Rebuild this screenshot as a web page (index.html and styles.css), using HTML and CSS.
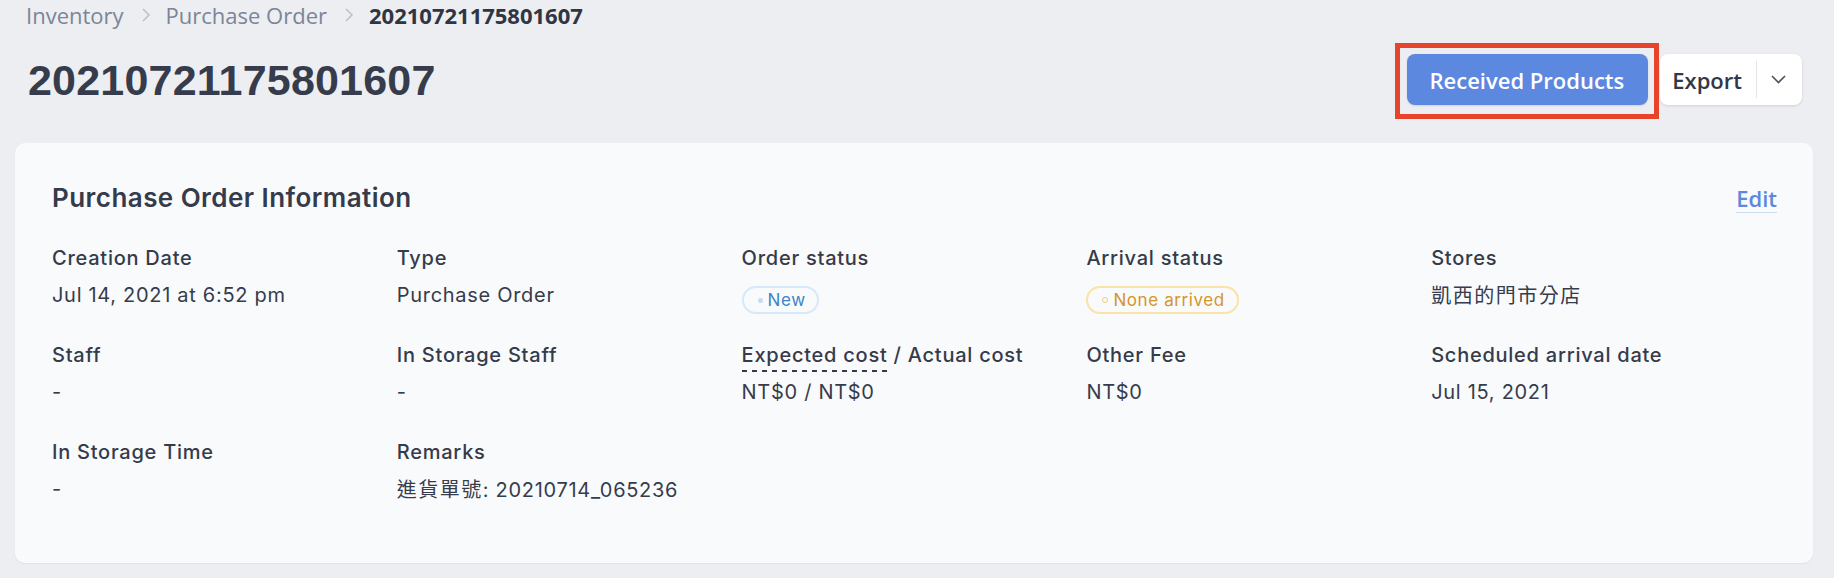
FILE: index.html
```html
<!DOCTYPE html>
<html lang="en">
<head>
<meta charset="utf-8">
<title>20210721175801607</title>
<link rel="stylesheet" href="styles.css">
</head>
<body>
<div class="page">
  <nav class="crumbs">
    <a class="crumb">Inventory</a>
    <svg class="sep" viewBox="0 0 8 14" aria-hidden="true"><polyline points="1,1 7,7 1,13"/></svg>
    <a class="crumb">Purchase Order</a>
    <svg class="sep" viewBox="0 0 8 14" aria-hidden="true"><polyline points="1,1 7,7 1,13"/></svg>
    <span class="crumb current">20210721175801607</span>
  </nav>

  <header class="head">
    <h1 class="title">20210721175801607</h1>
    <div class="actions">
      <span class="highlight">
        <button class="btn-primary">Received Products</button>
        <span class="annot"></span>
      </span>
      <div class="btn-split">
        <span class="split-label">Export</span>
        <span class="split-div"></span>
        <svg class="split-caret" viewBox="0 0 15 9" aria-hidden="true"><polyline points="1,1 7.5,7.5 14,1"/></svg>
      </div>
    </div>
  </header>

  <section class="card">
    <div class="card-head">
      <h2 class="card-title">Purchase Order Information</h2>
      <a class="edit">Edit</a>
    </div>
    <div class="grid">
      <div class="field"><div class="label">Creation Date</div><div class="value">Jul 14, 2021 at 6:52 pm</div></div>
      <div class="field"><div class="label">Type</div><div class="value">Purchase Order</div></div>
      <div class="field"><div class="label">Order status</div><div class="value badges"><span class="badge badge-new"><span class="dot"></span>New</span></div></div>
      <div class="field"><div class="label">Arrival status</div><div class="value badges"><span class="badge badge-none"><span class="dot"></span>None arrived</span></div></div>
      <div class="field"><div class="label">Stores</div><div class="value"><span class="cjk">凱西的門市分店</span></div></div>

      <div class="field"><div class="label">Staff</div><div class="value">-</div></div>
      <div class="field"><div class="label">In Storage Staff</div><div class="value">-</div></div>
      <div class="field"><div class="label"><span class="dashed">Expected cost</span> / Actual cost</div><div class="value">NT$0 / NT$0</div></div>
      <div class="field"><div class="label">Other Fee</div><div class="value">NT$0</div></div>
      <div class="field"><div class="label">Scheduled arrival date</div><div class="value">Jul 15, 2021</div></div>

      <div class="field"><div class="label">In Storage Time</div><div class="value">-</div></div>
      <div class="field"><div class="label">Remarks</div><div class="value"><span class="cjk">進貨單號</span>: 20210714_065236</div></div>
    </div>
  </section>
</div>
</body>
</html>
```

FILE: styles.css
```css
* { box-sizing: border-box; }

html, body {
  margin: 0;
  background: #eceef1;
}

.page {
  padding: 0 21px 15px 15px;
}

/* breadcrumb */
.crumbs {
  display: flex;
  align-items: center;
  height: 30px;
  padding-left: 11px;
  font-family: "Open Sans", "Liberation Sans", sans-serif;
  font-size: 22px;
  line-height: 30px;
  color: #7b8598;
}
.crumb { color: #7b8598; text-decoration: none; }
.crumb.current { color: #2f3542; font-weight: 700; }
.sep {
  width: 8px;
  height: 14px;
  margin: 0 16px 0 18px;
  fill: none;
  stroke: #b7bdc8;
  stroke-width: 1.4;
}

/* header */
.head {
  display: flex;
  justify-content: space-between;
  align-items: center;
  height: 51px;
  margin-top: 24px;
  padding: 0 11px 0 13px;
}
.title {
  margin: 0;
  font-family: "Liberation Sans", Arial, sans-serif;
  font-weight: 700;
  font-size: 43px;
  line-height: 48px;
  letter-spacing: 0.2px;
  color: #363c4b;
}
.actions {
  display: flex;
  align-items: center;
  gap: 12px;
}
.highlight {
  position: relative;
  display: inline-flex;
}
.btn-primary {
  height: 51px;
  padding: 0 24px 0 23px;
  border: 0;
  border-radius: 8px;
  background: #5c88e0;
  color: #fff;
  font-family: "Open Sans", sans-serif;
  font-weight: 600;
  font-size: 22px;
  box-shadow: 0 1px 2px rgba(40, 60, 110, 0.15);
}
.annot {
  position: absolute;
  left: -12px;
  top: -11px;
  right: -11px;
  bottom: -14px;
  border: 5px solid #e8442b;
  pointer-events: none;
}
.btn-split {
  display: flex;
  align-items: center;
  height: 51px;
  padding: 0 16px 0 12px;
  background: #fff;
  border-radius: 8px;
  box-shadow: 0 1px 3px rgba(0, 0, 0, 0.12);
}
.split-label {
  font-family: "Open Sans", sans-serif;
  font-weight: 600;
  font-size: 22px;
  color: #323846;
}
.split-div {
  width: 1px;
  height: 37px;
  margin: 0 14px 0 14px;
  background: #e1e4e9;
}
.split-caret {
  width: 15px;
  height: 9px;
  fill: none;
  stroke: #4a5160;
  stroke-width: 1.6;
}

/* card */
.card {
  margin-top: 38px;
  background: #f9fafb;
  border-radius: 10px;
  padding: 39px 37px 26px;
  box-shadow: 0 1px 2px rgba(20, 30, 50, 0.06);
}
.card-head {
  display: flex;
  justify-content: space-between;
  align-items: baseline;
}
.card-title {
  margin: 0;
  font-family: Inter, "Noto Sans", sans-serif;
  font-weight: 600;
  font-size: 26px;
  line-height: 32px;
  letter-spacing: 0.45px;
  color: #353b4a;
}
.edit {
  margin-right: -1px;
  font-family: "Open Sans", sans-serif;
  font-weight: 600;
  font-size: 22px;
  line-height: 26px;
  color: #5c88e0;
  text-decoration: none;
  padding-bottom: 1px;
  border-bottom: 1px solid #cbdaf5;
}

.grid {
  display: grid;
  grid-template-columns: repeat(5, 1fr);
  grid-auto-rows: 97px;
  margin-top: 32px;
}
.field {
  display: flex;
  flex-direction: column;
  gap: 13px;
}
.label {
  font-family: Inter, "Noto Sans CJK TC", sans-serif;
  font-weight: 500;
  font-size: 20px;
  line-height: 24px;
  letter-spacing: 0.75px;
  color: #353b4a;
}
.value {
  font-family: Inter, "Noto Sans CJK TC", sans-serif;
  font-weight: 400;
  font-size: 20px;
  line-height: 24px;
  letter-spacing: 0.7px;
  color: #363c4b;
}
.cjk {
  font-family: "Noto Sans CJK TC", sans-serif;
  letter-spacing: 1.5px;
}
.dashed {
  padding-bottom: 5px;
  background: linear-gradient(90deg, #353b4a 50%, transparent 50%) left bottom / 10px 2px repeat-x;
}

.badges { display: flex; }
.badge {
  display: inline-flex;
  align-items: center;
  height: 28px;
  margin-top: 3px;
  padding: 0 11px 0 14px;
  border: 2px solid;
  border-radius: 14px;
  font-family: Inter, sans-serif;
  font-size: 17px;
  letter-spacing: 0.6px;
}
.badge .dot {
  width: 5px;
  height: 5px;
  margin-right: 5px;
  border-radius: 50%;
}
.badge-new {
  border-color: #d6e9fb;
  color: #3d84c8;
}
.badge-new .dot { background: #c3dcf4; }
.badge-none {
  border-color: #fbe2a6;
  color: #d4952b;
  padding-right: 12px;
}
.badge-none .dot {
  width: 6px;
  height: 6px;
  border: 1px solid #f1cc86;
}
```
